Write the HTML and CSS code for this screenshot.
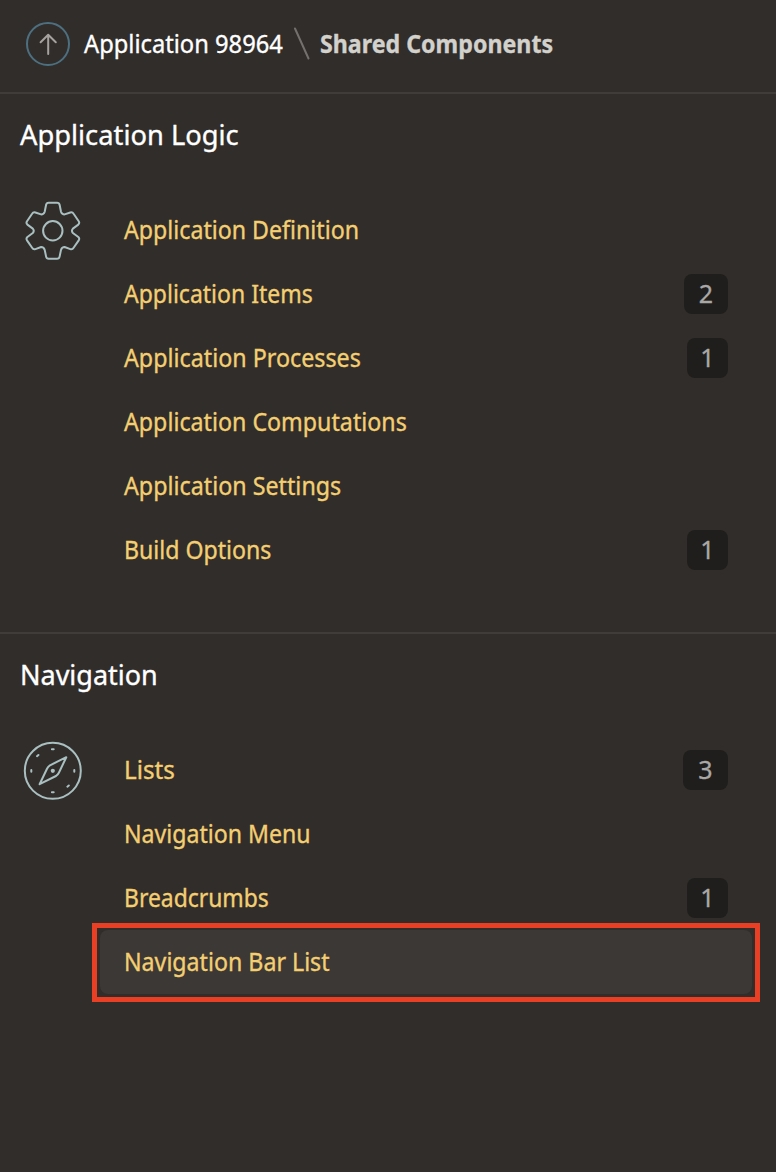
FILE: index.html
```html
<!DOCTYPE html>
<html lang="en">
<head>
<meta charset="utf-8">
<title>Shared Components</title>
<link rel="stylesheet" href="styles.css">
</head>
<body>
<header class="breadcrumb">
  <svg class="up-icon" viewBox="0 0 44 44"><circle cx="22" cy="22" r="21"/><path d="M22.2 32V12.8M14.6 20.2L22.2 12.8L29.8 20.2"/></svg>
  <a class="crumb"><span class="fit c1">Application 98964</span></a>
  <svg class="slash" viewBox="0 0 18 34"><path d="M2 1.5L15.5 31.5"/></svg>
  <h1 class="crumb current"><span class="fit c2">Shared Components</span></h1>
</header>
<main>
<section class="group logic">
  <h2 class="title"><span class="fit t1">Application Logic</span></h2>
  <div class="content">
    <svg class="icon" viewBox="0 0 60 60"><path d="M25.7 1.7H34Q36.2 1.7 36.6 3.8L38 10.7Q38.8 13.4 41.6 13.4L47.3 11.5Q49.4 10.8 50.6 12.8L55.7 20.2Q56.9 22 55.3 23.6L49.9 27.6Q48 29.8 49.9 32L55.3 36Q56.9 37.6 55.7 39.4L50.6 46.8Q49.4 48.8 47.3 48.1L41.6 46Q38.8 46 38 48.9L36.6 55.6Q36.2 57.7 34 57.7H25.7Q23.5 57.7 23.1 55.6L21.7 48.9Q20.9 46 18.1 46L12.4 48.1Q10.3 48.8 9.1 46.8L4 39.4Q2.8 37.6 4.4 36L9.8 32Q11.7 29.8 9.8 27.6L4.4 23.6Q2.8 22 4 20.2L9.1 12.8Q10.3 10.8 12.4 11.5L18.1 13.4Q20.9 13.4 21.7 10.7L23.1 3.8Q23.5 1.7 25.7 1.7Z"/><circle cx="29.8" cy="29.8" r="9.7"/></svg>
    <ul class="links">
      <li class="row"><span class="fit l1">Application Definition</span></li>
      <li class="row"><span class="fit l2">Application Items</span><b class="badge two">2</b></li>
      <li class="row"><span class="fit l3">Application Processes</span><b class="badge">1</b></li>
      <li class="row"><span class="fit l4">Application Computations</span></li>
      <li class="row"><span class="fit l5">Application Settings</span></li>
      <li class="row"><span class="fit l6">Build Options</span><b class="badge">1</b></li>
    </ul>
  </div>
</section>
<section class="group">
  <h2 class="title"><span class="fit t2">Navigation</span></h2>
  <div class="content">
    <svg class="icon" viewBox="0 0 60 60"><circle cx="29.8" cy="29.8" r="28"/><path d="M43.3 16.2L36 31.5Q35 33.5 33 35L16.6 43.2L24 27.8Q25 25.8 27 24.3Z"/><circle class="dot" cx="29.8" cy="29.8" r="2.1"/><path d="M28.9 8.2H30.7M28.9 51.3H30.7M8.3 28.9V30.7M51.3 28.9V30.7M14 15.2L15.4 14M44.4 45.7L45.8 44.5"/></svg>
    <ul class="links">
      <li class="row"><span class="fit n1">Lists</span><b class="badge three">3</b></li>
      <li class="row"><span class="fit n2">Navigation Menu</span></li>
      <li class="row"><span class="fit n3">Breadcrumbs</span><b class="badge">1</b></li>
      <li class="row selected"><span class="fit n4">Navigation Bar List</span></li>
    </ul>
  </div>
</section>
</main>
</body>
</html>
```
FILE: styles.css
```css
* { box-sizing: border-box; }
body { margin: 0; min-height: 1172px; background: #312d2a; color: #fff; font-family: "Noto Sans", sans-serif; font-size: 25px; line-height: 40px; }
svg { fill: none; flex: none; stroke-linecap: round; stroke-linejoin: round; }
h1, h2, ul { margin: 0; padding: 0; font: inherit; list-style: none; }
.breadcrumb { height: 94px; padding: 22px 26px 0; display: flex; border-bottom: 2px solid #403c39; }
.up-icon { width: 44px; height: 44px; stroke: #a5a29f; stroke-width: 2; }
.up-icon circle { stroke: #4d7080; }
.crumb { width: 199px; margin-left: 14px; line-height: 44px; white-space: nowrap; }
.slash { width: 18px; height: 34px; margin: 5px 0 0 10px; stroke: #73706d; stroke-width: 2; }
.crumb.current { margin-left: 9px; font-weight: 700; color: #d2d1cc; }

/* Narrowed lettering, tuned per label */
.fit { display: inline-block; white-space: nowrap; transform-origin: left center; transform: translateY(-1px) scaleX(var(--w)); -webkit-text-stroke: 0.35px currentColor; }
.c1 { --w: .948; }
.c2 { --w: .928; }
.t1 { --w: .975; }
.t2 { --w: .964; }
.l1 { --w: .927; }
.l2 { --w: .92; }
.l3 { --w: .931; }
.l4 { --w: .929; }
.l5 { --w: .931; }
.l6 { --w: .925; }
.n1 { --w: .967; }
.n2 { --w: .925; }
.n3 { --w: .916; }
.n4 { --w: .927; }

.group { height: 540px; border-bottom: 2px solid #403c39; }
.group:last-child { height: 538px; border: 0; }
.title { padding: 20px 20px 0; height: 104px; font-size: 28px; line-height: 42px; }
.content { display: flex; padding: 0 24px 0 23px; }
.icon { width: 60px; height: 60px; margin: 3px 17px 0 0; stroke: #a9bfc0; stroke-width: 2; }
.icon .dot { fill: #a9bfc0; stroke: none; }
.links { flex: 1; }
.row { height: 64px; display: flex; align-items: center; justify-content: space-between; padding: 0 24px; color: #f4cf72; border-radius: 8px; }
.badge { min-width: 41px; height: 40px; border-radius: 8px; background: #201e1c; color: #aaa8a6; font-weight: 400; text-align: center; line-height: 38px; -webkit-text-stroke: 0.3px currentColor; }
.two { min-width: 44px; }
.three { min-width: 45px; }
.selected { position: relative; background: #3c3835; }
.selected::after { content: ""; position: absolute; inset: -7px -8px -8px; border: 5px solid #e93f24; }
```
